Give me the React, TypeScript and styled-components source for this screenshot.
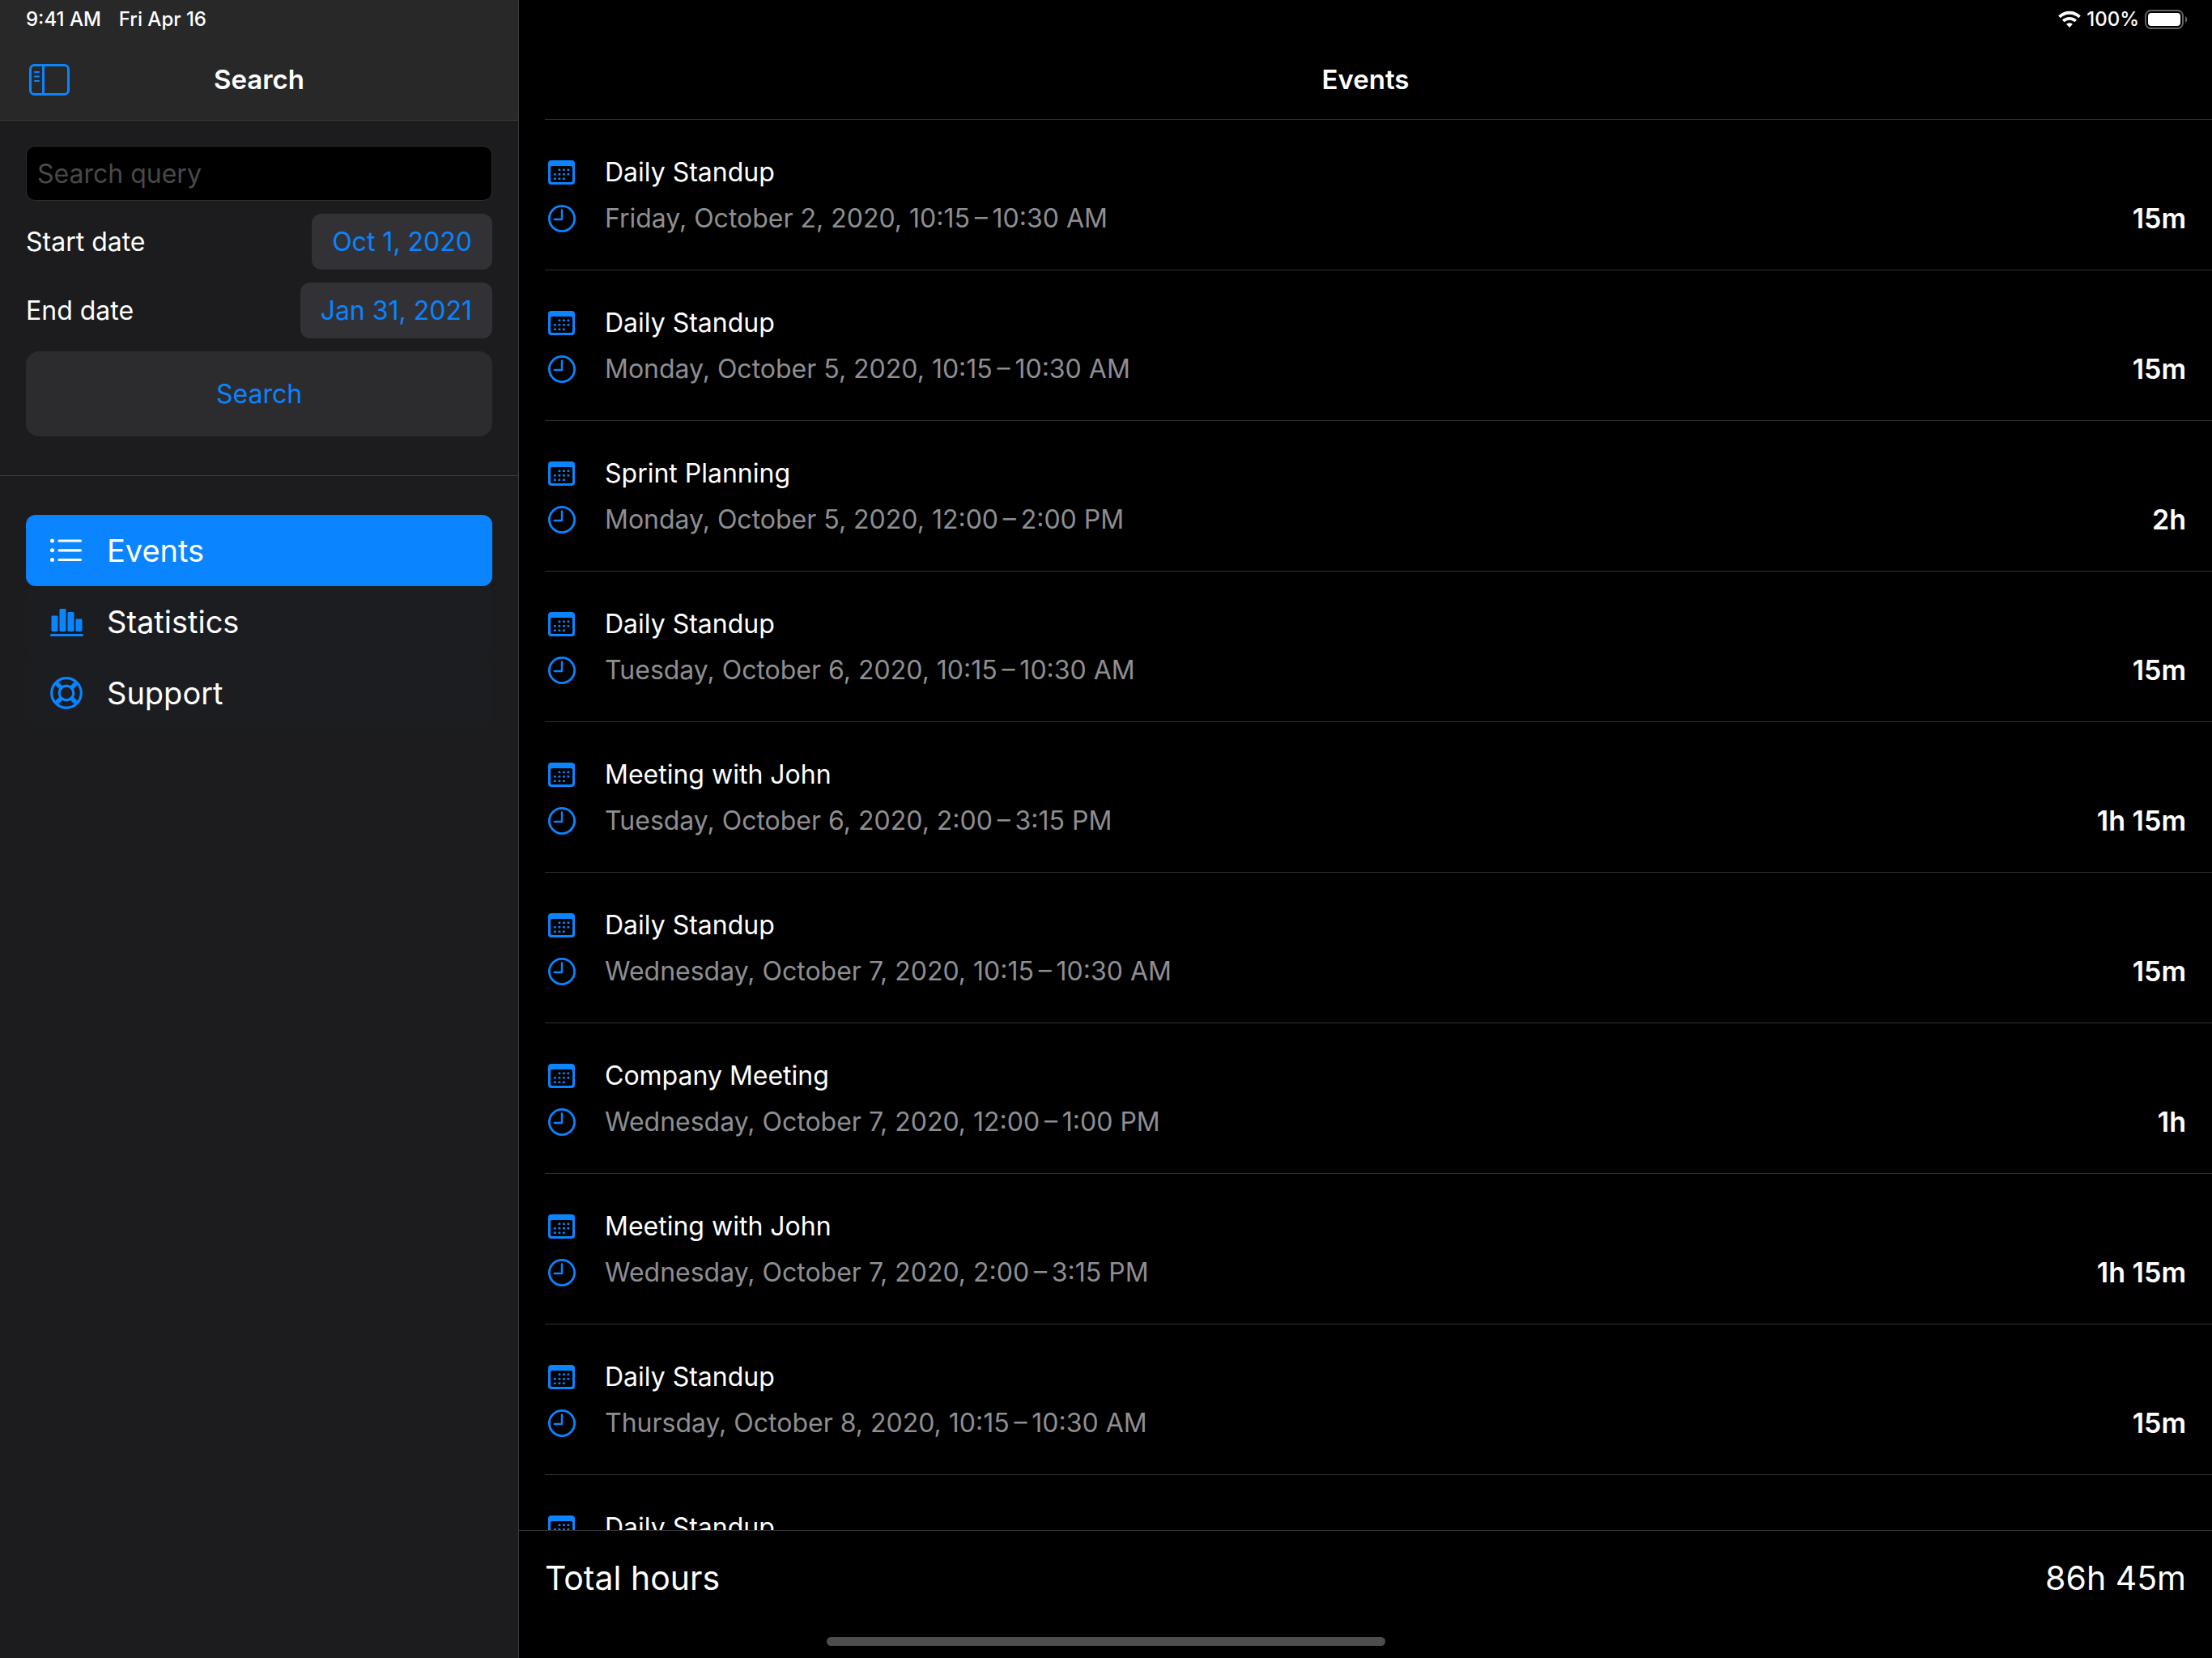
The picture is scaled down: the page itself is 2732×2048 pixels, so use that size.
import React from "react";
import styled, { createGlobalStyle, css } from "styled-components";

const blue = "#0a84ff";
const fontStack = `Inter, "Liberation Sans", sans-serif`;

const GlobalStyle = createGlobalStyle`
  *, *::before, *::after { box-sizing: border-box; }
  body { margin: 0; background: #000; color: #fff; font-family: ${fontStack}; font-size: 32px; line-height: 41px; }
  h1, ul, p { margin: 0; padding: 0; list-style: none; font: inherit; }
  button, input { font: inherit; margin: 0; border: 0; }
  a { color: inherit; text-decoration: none; }
  svg { display: block; flex: none; }
`;

const Screen = styled.div`
  display: flex;
  height: 100vh;
  overflow: hidden;
`;

const Sidebar = styled.aside`
  flex: none;
  width: 641px;
  background: #1c1c1e;
  border-right: 1px solid #3d3d41;
`;

const SidebarTop = styled.header`
  background: #282828;
  border-bottom: 1px solid #3d3d41;
`;

const StatusBar = styled.div<{ $end?: boolean }>`
  display: flex;
  align-items: center;
  justify-content: ${(p) => (p.$end ? "flex-end" : "flex-start")};
  gap: ${(p) => (p.$end ? 7 : 22)}px;
  height: 48px;
  padding: 0 30px 0 32px;
  font-size: 24px;
  line-height: 28px;
  font-weight: 500;
`;

const NavBar = styled.div`
  display: grid;
  grid-template-columns: 1fr auto 1fr;
  align-items: center;
  height: 100px;
  padding: 0 32px;
`;

const Title = styled.h1`
  grid-column: 2;
  font-size: 33px;
  font-weight: 600;
`;

const IconButton = styled.button`
  justify-self: start;
  padding: 4px;
  background: none;
  color: ${blue};
`;

const SearchForm = styled.form`
  display: flex;
  flex-direction: column;
  gap: 16px;
  padding: 31px 32px 48px;
  border-bottom: 1px solid #3d3d41;
`;

const SearchInput = styled.input`
  width: 100%;
  height: 68px;
  padding: 0 13px;
  border: 1px solid #2f2f31;
  border-radius: 11px;
  background: #000;
  color: #fff;
  &::placeholder { color: #48484a; opacity: 1; }
`;

const Field = styled.div`
  display: flex;
  align-items: center;
  justify-content: space-between;
`;

const DateButton = styled.button`
  height: 69px;
  padding: 0 25px;
  border-radius: 12px;
  background: #323236;
  color: ${blue};
`;

const SubmitButton = styled.button`
  height: 105px;
  border-radius: 16px;
  background: #2c2c2e;
  color: ${blue};
`;

const Menu = styled.nav`
  display: flex;
  flex-direction: column;
  padding: 48px 32px;
`;

const MenuLink = styled.a<{ $active?: boolean }>`
  display: flex;
  align-items: center;
  gap: 28px;
  height: 88px;
  padding: 0 28px;
  border-radius: 12px;
  background: #1c1d20;
  font-size: 38px;
  line-height: 48px;
  svg { color: ${blue}; }
  ${(p) =>
    p.$active &&
    css`
      background: ${blue};
      svg { color: #fff; }
    `}
`;

const Main = styled.main`
  display: flex;
  flex: 1;
  flex-direction: column;
  min-width: 0;
`;

const EventList = styled.ul`
  flex: 1;
  min-height: 0;
  overflow: hidden;
  margin: -1px 0 0 32px;
`;

const EventItem = styled.li`
  padding: 44px 32px 43px 0;
  border-top: 1px solid #303032;
`;

const Line = styled.div<{ $muted?: boolean }>`
  display: grid;
  grid-template-columns: 42px 1fr auto;
  align-items: center;
  column-gap: 32px;
  color: ${(p) => (p.$muted ? "#8e8e93" : "#fff")};
  & + & { margin-top: 16px; }
  svg { color: ${blue}; justify-self: center; }
`;

const Duration = styled.span`
  color: #fff;
  font-size: 34px;
  font-weight: 600;
`;

const Footer = styled.footer`
  display: flex;
  justify-content: space-between;
  padding: 33px 32px 73px;
  border-top: 1px solid #303032;
  font-size: 41px;
  line-height: 51px;
`;

const HomeIndicator = styled.div`
  position: fixed;
  bottom: 15px;
  left: 50%;
  width: 690px;
  height: 11px;
  margin-left: -345px;
  border-radius: 6px;
  background: #4d4d4d;
`;

const SidebarIcon = () => (
  <svg width="50" height="42" viewBox="0 0 50 42" fill="none" stroke="currentColor" strokeWidth="3">
    <rect x="1.5" y="3.5" width="47" height="36" rx="5" />
    <path d="M17.5 4v35" />
    <path d="M7 12h5M7 17.500h5M7 23h5" strokeWidth="2.200" strokeLinecap="round" />
  </svg>
);

const CalendarIcon = () => (
  <svg width="34" height="34" viewBox="0 0 34 34" fill="currentColor">
    <path
      fillRule="evenodd"
      d="M4 2H29a4 4 0 0 1 4 4v22a4 4 0 0 1-4 4H4a4 4 0 0 1-4-4V6a4 4 0 0 1 4-4zM5 9a2 2 0 0 0-2 2v16a2 2 0 0 0 2 2h23a2 2 0 0 0 2-2V11a2 2 0 0 0-2-2z"
    />
    {[
      [12.5, 12.5], [18, 12.5], [23.5, 12.5],
      [7, 18], [12.5, 18], [18, 18], [23.5, 18],
      [7, 23.5], [12.5, 23.5], [18, 23.5],
    ].map(([x, y]) => (
      <rect key={`${x}-${y}`} x={x} y={y} width="2.8" height="2.6" rx="0.6" />
    ))}
  </svg>
);

const ClockIcon = () => (
  <svg width="34" height="34" viewBox="0 0 34 34" fill="none" stroke="currentColor">
    <circle cx="17" cy="17" r="15.600" strokeWidth="2.800" />
    <path d="M17 6.500V18H7.800" strokeWidth="2.400" strokeLinecap="round" strokeLinejoin="round" />
  </svg>
);

const ListIcon = () => (
  <svg width="44" height="44" viewBox="0 0 44 44" fill="none" stroke="currentColor" strokeLinecap="round">
    <path d="M13 10h26.500M13 21.800h26.500M13 33.500h26.500" strokeWidth="3.200" />
    <path d="M4.500 10h0M4.500 21.800h0M4.500 33.500h0" strokeWidth="5" />
  </svg>
);

const ChartIcon = () => (
  <svg width="44" height="44" viewBox="0 0 44 44" fill="currentColor">
    <rect x="3.500" y="14.500" width="8" height="19.500" rx="1.400" />
    <rect x="13.500" y="6" width="8" height="28" rx="1.400" />
    <rect x="23.500" y="10" width="8" height="24" rx="1.400" />
    <rect x="33.500" y="18.500" width="8" height="15.500" rx="1.400" />
    <rect x="2" y="37" width="41" height="3" rx="1.500" />
  </svg>
);

const SupportIcon = () => (
  <svg width="44" height="44" viewBox="0 0 44 44" fill="none" stroke="currentColor">
    <circle cx="22" cy="22" r="18.300" strokeWidth="3.200" />
    <circle cx="22" cy="22" r="8.800" strokeWidth="3.200" />
    <path d="M15.500 15.500 9.500 9.500M28.500 15.500l6-6M15.500 28.500l-6 6M28.500 28.500l6 6" strokeWidth="5.400" />
  </svg>
);

const WifiIcon = () => (
  <svg width="28" height="22" viewBox="0 0 28 22" fill="none" stroke="currentColor">
    <path d="M1.500 7.800a18 18 0 0 1 25 0" strokeWidth="3.800" />
    <path d="M6.300 13a11 11 0 0 1 15.400 0" strokeWidth="3.800" />
    <path d="M14 21l-4-4.200a5.800 5.800 0 0 1 8 0z" fill="currentColor" stroke="none" />
  </svg>
);

const BatteryIcon = () => (
  <svg width="53" height="24" viewBox="0 0 53 24" fill="none">
    <rect x="1" y="1" width="46" height="22" rx="6.500" stroke="#636363" strokeWidth="2" />
    <rect x="4" y="4" width="40" height="16" rx="4" fill="#fff" />
    <path d="M50 8c3 1.200 3 6.800 0 8z" fill="#636363" />
  </svg>
);

type Event = { name: string; time?: string; duration?: string };

const events: Event[] = [
  { name: "Daily Standup", time: "Friday, October 2, 2020, 10:15\u2009–\u200910:30 AM", duration: "15m" },
  { name: "Daily Standup", time: "Monday, October 5, 2020, 10:15\u2009–\u200910:30 AM", duration: "15m" },
  { name: "Sprint Planning", time: "Monday, October 5, 2020, 12:00\u2009–\u20092:00 PM", duration: "2h" },
  { name: "Daily Standup", time: "Tuesday, October 6, 2020, 10:15\u2009–\u200910:30 AM", duration: "15m" },
  { name: "Meeting with John", time: "Tuesday, October 6, 2020, 2:00\u2009–\u20093:15 PM", duration: "1h 15m" },
  { name: "Daily Standup", time: "Wednesday, October 7, 2020, 10:15\u2009–\u200910:30 AM", duration: "15m" },
  { name: "Company Meeting", time: "Wednesday, October 7, 2020, 12:00\u2009–\u20091:00 PM", duration: "1h" },
  { name: "Meeting with John", time: "Wednesday, October 7, 2020, 2:00\u2009–\u20093:15 PM", duration: "1h 15m" },
  { name: "Daily Standup", time: "Thursday, October 8, 2020, 10:15\u2009–\u200910:30 AM", duration: "15m" },
  { name: "Daily Standup" },
];

export default function App() {
  return (
    <Screen>
      <GlobalStyle />
      <Sidebar>
        <SidebarTop>
          <StatusBar>
            <span>9:41 AM</span>
            <span>Fri Apr 16</span>
          </StatusBar>
          <NavBar>
            <IconButton type="button" aria-label="Toggle sidebar">
              <SidebarIcon />
            </IconButton>
            <Title>Search</Title>
          </NavBar>
        </SidebarTop>
        <SearchForm onSubmit={(e) => e.preventDefault()}>
          <SearchInput type="text" aria-label="Search query" placeholder="Search query" />
          <Field>
            <label htmlFor="start">Start date</label>
            <DateButton id="start" type="button">Oct 1, 2020</DateButton>
          </Field>
          <Field>
            <label htmlFor="end">End date</label>
            <DateButton id="end" type="button">Jan 31, 2021</DateButton>
          </Field>
          <SubmitButton type="submit">Search</SubmitButton>
        </SearchForm>
        <Menu>
          <MenuLink href="#events" $active aria-current="page">
            <ListIcon />
            Events
          </MenuLink>
          <MenuLink href="#statistics">
            <ChartIcon />
            Statistics
          </MenuLink>
          <MenuLink href="#support">
            <SupportIcon />
            Support
          </MenuLink>
        </Menu>
      </Sidebar>
      <Main>
        <StatusBar $end>
          <WifiIcon />
          <span>100%</span>
          <BatteryIcon />
        </StatusBar>
        <NavBar>
          <Title>Events</Title>
        </NavBar>
        <EventList>
          {events.map(({ name, time, duration }, i) => (
            <EventItem key={i}>
              <Line>
                <CalendarIcon />
                <span>{name}</span>
              </Line>
              {time && (
                <Line $muted>
                  <ClockIcon />
                  <span>{time}</span>
                  <Duration>{duration}</Duration>
                </Line>
              )}
            </EventItem>
          ))}
        </EventList>
        <Footer>
          <span>Total hours</span>
          <span>86h 45m</span>
        </Footer>
      </Main>
      <HomeIndicator />
    </Screen>
  );
}
